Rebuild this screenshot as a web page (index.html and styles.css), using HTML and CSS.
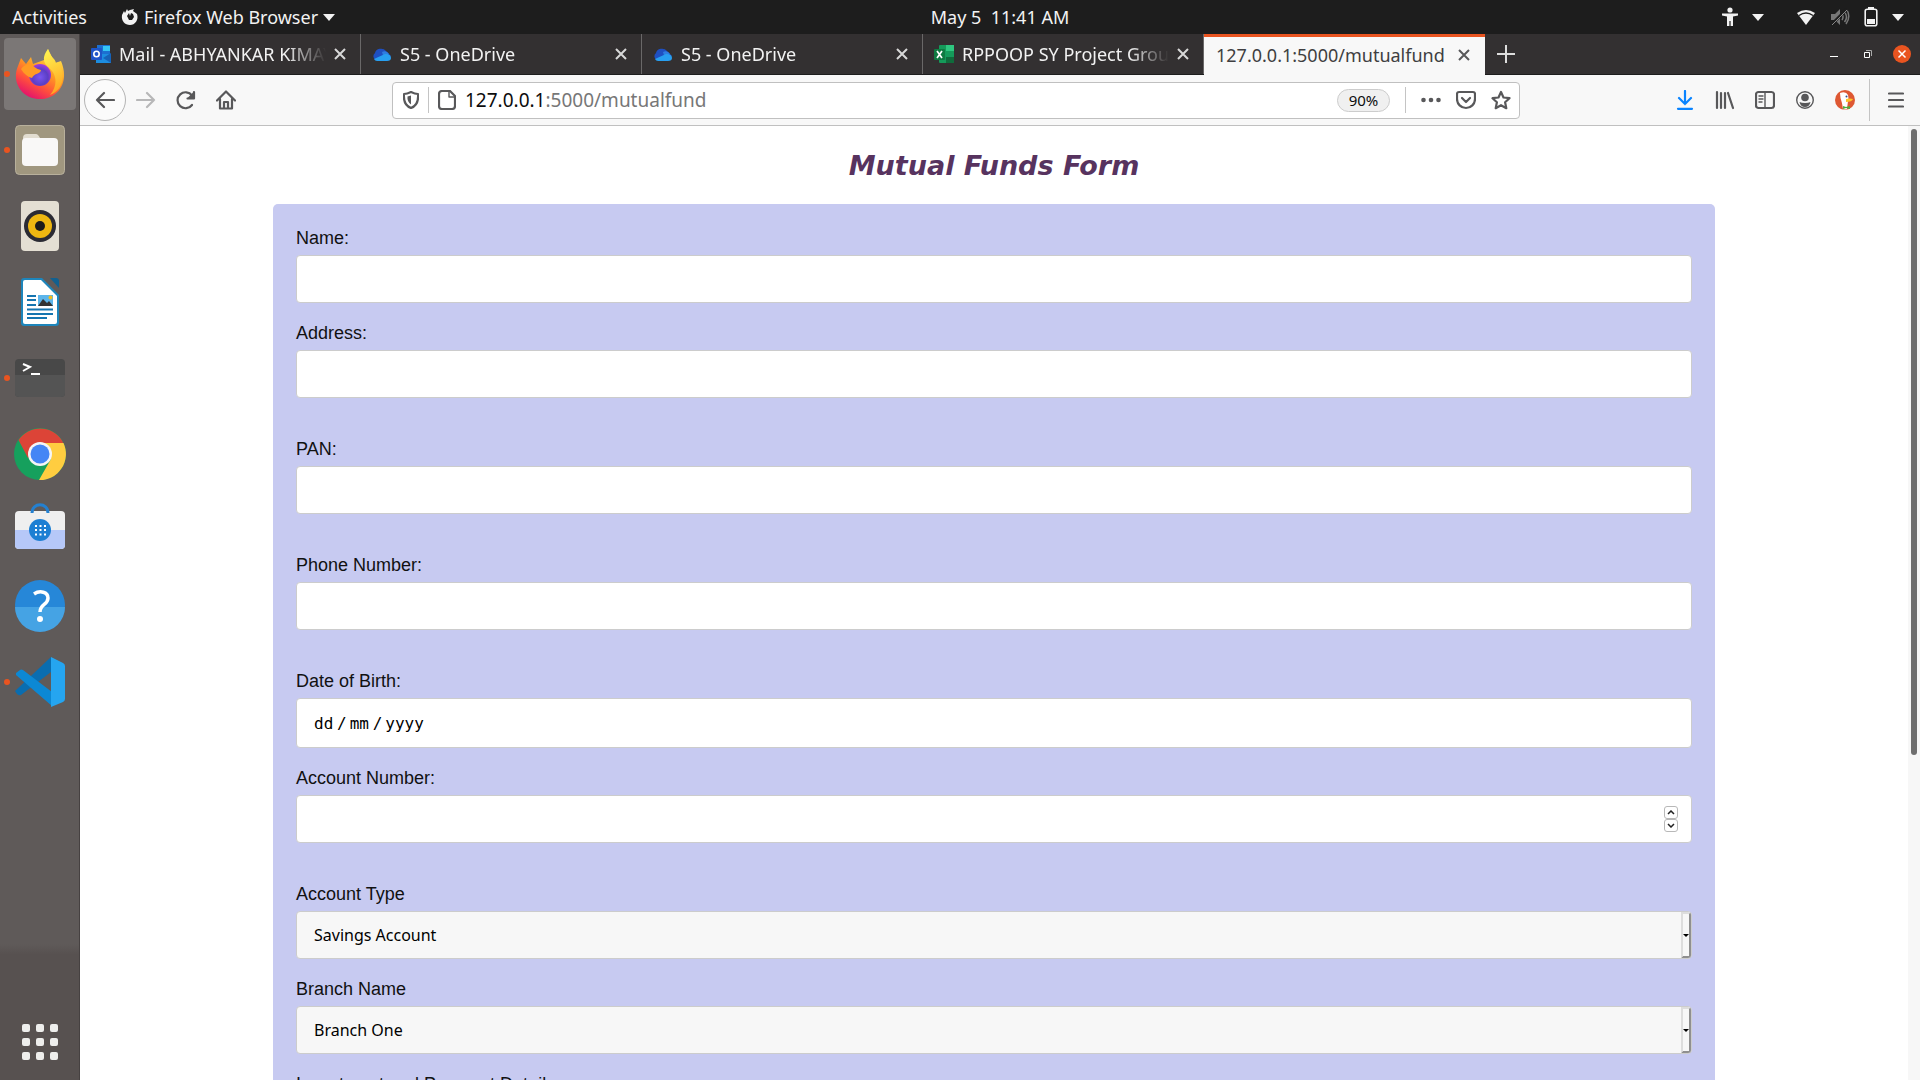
FILE: index.html
```html
<!DOCTYPE html>
<html lang="en">
<head>
<meta charset="utf-8">
<title>Mutual Funds Form</title>
<link rel="stylesheet" href="styles.css">
</head>
<body>
<header class="topbar">
  <div class="topbar-left">
    <button class="top-btn">Activities</button>
    <button class="top-btn app-menu">
      <svg width="18" height="18" viewBox="0 0 18 18"><path d="M6 1 7 3 9 2 13 1 12 3 16 6C18 12 14 17 9 17S0 13 1 7L3 3 4 5ZM8 5 6 8 8 12 11 12 13 9 12 6 10 5 9 8Z" fill="#f2f2f2" fill-rule="evenodd"/></svg>
      Firefox Web Browser
      <svg width="12" height="8" viewBox="0 0 12 8"><path d="M0 1h12L6 8Z" fill="#f2f2f2"/></svg>
    </button>
  </div>
  <button class="top-btn clock">May 5&nbsp; 11:41 AM</button>
  <div class="topbar-right">
    <svg width="16" height="20" viewBox="0 0 16 20"><circle cx="8" cy="3" r="2.6" fill="#f2f2f2"/><path d="M0 6.5h16v2l-5 1V19H8.600v-5H7.400v5H5V9.500l-5-1Z" fill="#f2f2f2"/></svg>
    <svg class="gap-wide" width="12" height="8" viewBox="0 0 12 8"><path d="M0 1h12L6 8Z" fill="#f2f2f2"/></svg>
    <svg width="20" height="18" viewBox="0 0 20 18"><path d="M1 5Q10-1 19 5L10 17Z" fill="#f2f2f2"/><path d="M3 7.500Q10 2.500 17 7.500" fill="none" stroke="#1d1d1d" stroke-width="1.300"/></svg>
    <svg width="20" height="18" viewBox="0 0 20 18"><path d="M1 6h4l5-5v16l-5-5H1Z" fill="#777"/><path d="M12 6q2 3 0 6M14.500 4q4 5 0 10M17 2q4 7-1 14" fill="none" stroke="#777" stroke-width="1.500"/><path d="M1 17 17 1" stroke="#1d1d1d" stroke-width="3"/><path d="M2 17 17 2" stroke="#888" stroke-width="1"/></svg>
    <svg width="14" height="20" viewBox="0 0 14 20"><path d="M4 0h6v3H4Z" fill="#f2f2f2"/><rect x="1.200" y="2.200" width="11.600" height="16.600" rx="2" fill="none" stroke="#f2f2f2" stroke-width="1.600"/><path d="M3 12h8v5H3Z" fill="#f2f2f2"/></svg>
    <svg width="12" height="8" viewBox="0 0 12 8"><path d="M0 1h12L6 8Z" fill="#f2f2f2"/></svg>
  </div>
</header>

<div class="desktop">
  <nav class="dock" aria-label="Dock">
    <button class="dock-item running current" aria-label="Firefox">
      <svg width="50" height="52" viewBox="0 0 50 52">
        <defs>
          <linearGradient id="fx" x1=".8" y1=".1" x2=".3" y2="1"><stop offset="0" stop-color="#ffe14a"/><stop offset=".4" stop-color="#ff9a22"/><stop offset=".7" stop-color="#ff4f3c"/><stop offset="1" stop-color="#e3106f"/></linearGradient>
          <linearGradient id="fy" x1=".5" y1="0" x2=".7" y2="1"><stop offset="0" stop-color="#fff04e"/><stop offset="1" stop-color="#ffa01e"/></linearGradient>
          <radialGradient id="fp" cx=".5" cy=".6" r=".6"><stop offset="0" stop-color="#7a55f0"/><stop offset=".6" stop-color="#5b3fc4"/><stop offset="1" stop-color="#a63ae0"/></radialGradient>
        </defs>
        <path d="M6 10 11 16 16 9 18 16 29 12 33 1 40 15 46 13C55 34 43 51 25 51S-4 34 3 18Z" fill="url(#fx)"/>
        <path d="M33 1c2 8 7 9 8 14l3-1c8 17 2 29-9 33 8-9 7-21-1-27-5-4-8-10-1-19Z" fill="url(#fy)"/>
        <circle cx="25" cy="27" r="11" fill="url(#fp)"/>
        <path d="M15 16c4 2 6 5 11 6 0 4-7 3-9 8-4-1-8-4-11-9 2-3 5-5 9-5Z" fill="#ff9b24"/>
      </svg>
    </button>
    <button class="dock-item running" aria-label="Files">
      <svg width="50" height="50" viewBox="0 0 50 50"><rect x=".5" y=".5" width="49" height="49" rx="4" fill="#a0977f" stroke="#b8b09c"/><path d="M8 13q0-4 4-4h9q2 0 4 4h3v10H8Z" fill="#e2ddd0"/><rect x="7" y="13" width="36" height="28" rx="4" fill="#f9f8f7"/></svg>
    </button>
    <button class="dock-item" aria-label="Rhythmbox">
      <svg width="50" height="50" viewBox="0 0 50 50"><rect x="6" y="0" width="38" height="50" rx="4" fill="#e4dfd3"/><circle cx="25" cy="25" r="16" fill="#2b2b33"/><circle cx="25" cy="25" r="12" fill="#eeb711"/><circle cx="25" cy="25" r="5" fill="#1b1b1b"/></svg>
    </button>
    <button class="dock-item" aria-label="LibreOffice Writer">
      <svg width="50" height="50" viewBox="0 0 50 50"><path d="M9 1h18l17 17v28q0 3-3 3H9q-3 0-3-3V4q0-3 3-3Z" fill="#1d85bb"/><path d="M10 3h16l16 16v26q0 2-2 2H10q-2 0-2-2V5q0-2 2-2Z" fill="#fff"/><path d="M35 1h6q3 0 3 3v7Z" fill="#12608f"/><path d="M12 19h9M12 23h9M12 28h9M12 32.500h26M12 37h26M12 41h20" stroke="#1575b0" stroke-width="2"/><path d="M23 18h15v11H23Z" fill="#5db5ea"/><path d="m23 29 5-7 4 4 2-2 4 5Z" fill="#333"/><circle cx="35.500" cy="20.500" r="2" fill="#f0bd20"/></svg>
    </button>
    <button class="dock-item running" aria-label="Terminal">
      <svg width="50" height="50" viewBox="0 0 50 50"><rect y="6" width="50" height="38" rx="4" fill="#484848"/><path d="M0 22h50v18q0 4-4 4H4q-4 0-4-4Z" fill="#545454"/><path d="m8 11 7 3-7 4M16 21h9" fill="none" stroke="#fff" stroke-width="2"/></svg>
    </button>
    <button class="dock-item" aria-label="Chrome">
      <svg width="52" height="52" viewBox="0 0 52 52"><circle cx="26" cy="26" r="26" fill="#16a05d"/><path d="M4.500 12A26 26 0 0 1 48 12.500l1.500 3H26L14 30Z" fill="#dc4437"/><path d="M26 15h23.500A26 26 0 0 1 25 52l12-21Z" fill="#ffcd40"/><circle cx="26" cy="26" r="12" fill="#f5f5f5"/><circle cx="26" cy="26" r="9.500" fill="#4486f5"/></svg>
    </button>
    <button class="dock-item" aria-label="Software">
      <svg width="50" height="54" viewBox="0 2 50 54"><rect y="10" width="50" height="38" rx="4" fill="#efefef"/><path d="M0 29h50v15q0 4-4 4H4q-4 0-4-4Z" fill="#b6c8f8"/><path d="M17 12C17 1 33 1 33 12" fill="none" stroke="#2480d0" stroke-width="3"/><circle cx="25" cy="29" r="11" fill="#1d7fd3"/><path d="M20 25h12M20 29h12M20 33.500h12" stroke="#fff" stroke-width="2" stroke-dasharray="2 2.500"/></svg>
    </button>
    <button class="dock-item" aria-label="Help">
      <svg width="50" height="52" viewBox="0 0 50 52"><circle cx="25" cy="25" r="25" fill="#2687d8"/><path d="M0 27h50a25 25 0 0 1-50 0Z" fill="#45a3e4"/><path d="M19 14c6-4 14-2 14 4 0 7-8 6-8 14" fill="none" stroke="#fff" stroke-width="3.500"/><circle cx="25" cy="39" r="3" fill="#fff"/></svg>
    </button>
    <button class="dock-item running" aria-label="Visual Studio Code">
      <svg width="50" height="50" viewBox="0 0 50 50"><path d="M0 34 36 0v15L6 38q-2 1-4-1Z" fill="#0a6db0"/><path d="m1 16 4-3q1-1 3 0l29 22v14L1 18Z" fill="#0c88d4"/><path d="m36 0 12 6q2 1 2 3v33q0 2-2 3l-12 5Z" fill="#25a5f0"/></svg>
    </button>
    <button class="apps-button" aria-label="Show Applications">
      <svg width="36" height="36" viewBox="0 0 36 36" fill="#eeeeec"><rect width="8" height="8" rx="2"/><rect x="14" width="8" height="8" rx="2"/><rect x="28" width="8" height="8" rx="2"/><rect y="14" width="8" height="8" rx="2"/><rect x="14" y="14" width="8" height="8" rx="2"/><rect x="28" y="14" width="8" height="8" rx="2"/><rect y="28" width="8" height="8" rx="2"/><rect x="14" y="28" width="8" height="8" rx="2"/><rect x="28" y="28" width="8" height="8" rx="2"/></svg>
    </button>
  </nav>

  <div class="window">
    <div class="tabstrip">
      <div class="tab">
        <svg width="20" height="18" viewBox="0 0 20 18"><path d="M6 0h13v10H6Z" fill="#1c6fd0"/><path d="M12 1h7v5h-7Z" fill="#35c5f5"/><path d="m5 9 15 0v9H5Z" fill="#1d8de0"/><path d="m12 13 8-5v10Z" fill="#1662b8"/><rect y="3" width="11" height="12" rx="1" fill="#1e55c8"/><circle cx="5.500" cy="9" r="2.700" fill="none" stroke="#fff" stroke-width="1.600"/></svg>
        <span class="tab-title">Mail - ABHYANKAR KIMAY</span>
        <button class="tab-close" aria-label="Close tab"><svg width="12" height="12" viewBox="0 0 12 12"><path d="m1 1 10 10M11 1 1 11"/></svg></button>
      </div>
      <div class="tab">
        <svg width="20" height="14" viewBox="0 0 20 14"><path d="M3 6a6 5 0 0 1 11-2l5 5-15 4A4 4 0 0 1 3 6Z" fill="#1f4fc0"/><path d="M10 5a5 5 0 0 1 7 2l-5 5Z" fill="#2f7de0"/><path d="m2 12 11-5q6 0 6 4 0 3-4 3H5q-2 0-3-2Z" fill="#289ff0"/></svg>
        <span class="tab-title">S5 - OneDrive</span>
        <button class="tab-close" aria-label="Close tab"><svg width="12" height="12" viewBox="0 0 12 12"><path d="m1 1 10 10M11 1 1 11"/></svg></button>
      </div>
      <div class="tab">
        <svg width="20" height="14" viewBox="0 0 20 14"><path d="M3 6a6 5 0 0 1 11-2l5 5-15 4A4 4 0 0 1 3 6Z" fill="#1f4fc0"/><path d="M10 5a5 5 0 0 1 7 2l-5 5Z" fill="#2f7de0"/><path d="m2 12 11-5q6 0 6 4 0 3-4 3H5q-2 0-3-2Z" fill="#289ff0"/></svg>
        <span class="tab-title">S5 - OneDrive</span>
        <button class="tab-close" aria-label="Close tab"><svg width="12" height="12" viewBox="0 0 12 12"><path d="m1 1 10 10M11 1 1 11"/></svg></button>
      </div>
      <div class="tab">
        <svg width="20" height="18" viewBox="0 0 20 18"><rect x="5" width="15" height="18" rx="1" fill="#159a5a"/><path d="M12 0h8v6h-8Z" fill="#2fc77f"/><path d="M12 12h8v6h-8Z" fill="#106b3c"/><rect y="4" width="11" height="11" rx="1" fill="#0f7a41"/><path d="m3 6 5 7M8 6l-5 7" stroke="#fff" stroke-width="1.700"/></svg>
        <span class="tab-title">RPPOOP SY Project Grou</span>
        <button class="tab-close" aria-label="Close tab"><svg width="12" height="12" viewBox="0 0 12 12"><path d="m1 1 10 10M11 1 1 11"/></svg></button>
      </div>
      <div class="tab active">
        <span class="tab-title">127.0.0.1:5000/mutualfund</span>
        <button class="tab-close" aria-label="Close tab"><svg width="12" height="12" viewBox="0 0 12 12"><path d="m1 1 10 10M11 1 1 11"/></svg></button>
      </div>
      <button class="new-tab" aria-label="New tab"><svg width="18" height="18" viewBox="0 0 18 18"><path d="M9 0v18M0 9h18" stroke="#ddd" stroke-width="2"/></svg></button>
      <div class="window-controls">
        <button aria-label="Minimize"><svg width="18" height="18" viewBox="0 0 18 18"><path d="M5 11.500h8" stroke="#fff"/></svg></button>
        <button aria-label="Restore"><svg width="18" height="18" viewBox="0 0 18 18"><path d="M5.500 7.500h5v5h-5Z" fill="none" stroke="#fff"/><path d="M7 5.500h5.500V11" fill="none" stroke="#aaa"/></svg></button>
        <button aria-label="Close"><svg width="18" height="18" viewBox="0 0 18 18"><circle cx="9" cy="9" r="9" fill="#e95420"/><path d="m5.500 5.500 7 7m0-7-7 7" stroke="#fff" stroke-width="1.500"/></svg></button>
      </div>
    </div>

    <div class="toolbar">
      <div class="nav-buttons">
        <button class="back" aria-label="Back"><svg width="20" height="18" viewBox="0 0 20 18"><path d="M19 9H2M9 2 2 9l7 7" class="line"/></svg></button>
        <button aria-label="Forward"><svg class="faded" width="20" height="18" viewBox="0 0 20 18"><path d="M1 9h17M11 2l7 7-7 7" class="line"/></svg></button>
        <button aria-label="Reload"><svg width="20" height="20" viewBox="0 0 20 20"><path d="M16 15A8 8 0 1 1 16 5.500" class="line"/><path d="M18 1.500v7h-7Z" fill="#58585a"/><path d="M18 2v6.500h-6.500" class="line"/></svg></button>
        <button aria-label="Home"><svg width="20" height="20" viewBox="0 0 20 20"><path d="m1 10.500 9-9 9 9M4 9v9.500h12V9" class="line"/><path d="M8 18v-6h4v6" class="line"/></svg></button>
      </div>
      <div class="urlbar">
        <svg width="16" height="18" viewBox="0 0 16 18"><path d="M8 1q4 2 7 2 1 11-7 14-8-3-7-14 3 0 7-2Z" class="line"/><path d="M8 4.500v9Q4 11 4.500 5.500Z" fill="#58585a"/></svg>
        <span class="divider"></span>
        <svg width="18" height="20" viewBox="0 0 18 20"><path d="M4 1h8l5 5v10q0 3-3 3H4q-3 0-3-3V4q0-3 3-3Z" class="line"/><path d="M11 1v6h6" class="line thin"/></svg>
        <div class="url" role="textbox" aria-label="Address bar"><b>127.0.0.1</b>:5000/mutualfund</div>
        <button class="zoom-level">90%</button>
        <span class="divider"></span>
        <svg width="20" height="20" viewBox="0 0 20 20"><g fill="#58585a"><circle cx="2.500" cy="10" r="2.300"/><circle cx="10" cy="10" r="2.300"/><circle cx="17.500" cy="10" r="2.300"/></g></svg>
        <svg width="20" height="20" viewBox="0 0 20 20"><path d="M3 2h14q2 0 2 2v5a9 9 0 0 1-18 0V4q0-2 2-2Z" class="line"/><path d="m6 8 4 4 4-4" class="line"/></svg>
        <svg width="20" height="20" viewBox="0 0 20 20"><path d="m10 2 2.500 5.500 6 .700-4.400 4 1.200 6L10 15.200l-5.300 3 1.200-6-4.400-4 6-.700Z" class="line"/></svg>
      </div>
      <div class="tools">
        <button aria-label="Downloads"><svg width="20" height="20" viewBox="0 0 20 20"><path d="M10 1v13M4 8l6 6 6-6M3 18.800h14" fill="none" stroke="#0a84ff" stroke-width="2.200" stroke-linecap="round"/></svg></button>
        <button aria-label="Library"><svg width="20" height="20" viewBox="0 0 20 20"><path d="M2 2v16M6 3v15M10 3v15M13 3l5 15" class="line"/></svg></button>
        <button aria-label="Sidebars"><svg width="20" height="20" viewBox="0 0 20 20"><rect x="1" y="2" width="18" height="16" rx="2.500" class="line"/><path d="M10 2v16M4 6h4M4 9h4M4 12h3" class="line thin"/></svg></button>
        <button aria-label="Account"><svg width="20" height="20" viewBox="0 0 20 20"><circle cx="10" cy="10" r="8.300" class="line thin"/><circle cx="10" cy="7.500" r="3.800" fill="#58585a"/><path d="M4.500 12q2 1 5.500 1t5.500-1q-1 5-5.500 5t-5.500-5Z" fill="#58585a"/></svg></button>
        <button aria-label="DuckDuckGo"><svg width="20" height="20" viewBox="0 0 20 20"><circle cx="10" cy="10" r="10" fill="#de5833"/><path d="M5 3q6-2 8 2 1 3 0 6l-1 8q-2 1-4 0Q7 12 5.500 8Z" fill="#fff"/><path d="M11 9q4-1 7 0-1 3-7 3Z" fill="#fdc42a"/><circle cx="11.500" cy="6.500" r="1" fill="#2d4f8e"/><path d="m8 16 3 1 4-1v3l-4-1-3 1Z" fill="#4caf3a"/></svg></button>
        <span class="divider tall"></span>
        <button class="menu" aria-label="Menu"><svg width="16" height="16" viewBox="0 0 16 16"><path d="M1 1.500h14M1 8h14M1 14.500h14" class="line"/></svg></button>
      </div>
    </div>

    <div class="viewport">
      <main class="page">
        <h1>Mutual Funds Form</h1>
        <form class="fund-form">
          <div class="field"><label for="name">Name:</label><input class="box" id="name" type="text"></div>
          <div class="field spaced"><label for="address">Address:</label><input class="box" id="address" type="text"></div>
          <div class="field spaced"><label for="pan">PAN:</label><input class="box" id="pan" type="text"></div>
          <div class="field spaced"><label for="phone">Phone Number:</label><input class="box" id="phone" type="text"></div>
          <div class="field">
            <label for="dob-day">Date of Birth:</label>
            <div class="box date-box" role="group" aria-label="Date of Birth">
              <input id="dob-day" type="text" placeholder="dd" aria-label="Day"><span>/</span><input type="text" placeholder="mm" aria-label="Month"><span>/</span><input class="year" type="text" placeholder="yyyy" aria-label="Year">
            </div>
          </div>
          <div class="field spaced">
            <label for="account">Account Number:</label>
            <div class="control">
              <input class="box" id="account" type="number">
              <div class="spinner">
                <button type="button" aria-label="Increase"><svg width="8" height="5" viewBox="0 0 8 5"><path d="m1 4 3-3 3 3"/></svg></button>
                <button type="button" aria-label="Decrease"><svg width="8" height="5" viewBox="0 0 8 5"><path d="m1 1 3 3 3-3"/></svg></button>
              </div>
            </div>
          </div>
          <div class="field">
            <label for="type">Account Type</label>
            <div class="control">
              <select class="box" id="type"><option>Savings Account</option></select>
              <span class="drop"><svg width="6" height="3" viewBox="0 0 6 3"><path d="M0 0h6L3 3Z"/></svg></span>
            </div>
          </div>
          <div class="field">
            <label for="branch">Branch Name</label>
            <div class="control">
              <select class="box" id="branch"><option>Branch One</option></select>
              <span class="drop"><svg width="6" height="3" viewBox="0 0 6 3"><path d="M0 0h6L3 3Z"/></svg></span>
            </div>
          </div>
          <div class="field"><label for="details">Investment and Payment Details</label><input class="box" id="details" type="text"></div>
        </form>
      </main>
      <div class="scrollbar"><div class="thumb"></div></div>
    </div>
  </div>
</div>
</body>
</html>
```
FILE: styles.css
```css
* { box-sizing: border-box; }

body {
  margin: 0;
  height: 100vh;
  display: flex;
  flex-direction: column;
  overflow: hidden;
  font-family: "Noto Sans", "Open Sans", sans-serif;
  font-size: 18px;
  background: #fff;
}

button {
  display: flex;
  align-items: center;
  justify-content: center;
  padding: 0;
  border: 0;
  background: none;
  color: inherit;
  font: inherit;
}

svg { flex: none; display: block; }

/* System bar: the clock is centred over the window area, right of the dock */
.topbar {
  flex: none;
  height: 34px;
  display: grid;
  grid-template-columns: 1fr auto 1fr;
  align-items: center;
  padding: 0 16px 0 96px;
  background: #1d1d1d;
  color: #f2f2f2;
  line-height: 24px;
}
.topbar-left { display: flex; gap: 34px; margin-left: -84px; }
.app-menu { gap: 5px; }
.topbar-right { display: flex; justify-content: flex-end; align-items: center; gap: 14px; }
.topbar-right .gap-wide { margin-right: 18px; }

.desktop { flex: 1; min-height: 0; display: flex; }

/* Dock */
.dock {
  flex: none;
  width: 80px;
  display: flex;
  flex-direction: column;
  align-items: center;
  gap: 4px;
  padding: 4px 0 20px;
  border-right: 1px solid #464141;
  background: linear-gradient(#5f5a59 87%, #575150 88%);
}
.dock-item { position: relative; width: 72px; height: 72px; border-radius: 4px; }
.dock-item.current { background: #7b7776; }
.dock-item.running::before {
  content: "";
  position: absolute;
  left: 0;
  top: 33px;
  width: 6px;
  height: 6px;
  border-radius: 50%;
  background: #e95420;
}
.apps-button { margin-top: auto; }

/* Browser window */
.window { flex: 1; min-width: 0; display: flex; flex-direction: column; }

.tabstrip {
  flex: none;
  height: 41px;
  display: flex;
  background: #333031;
  color: #f2f2f2;
  border-bottom: 1px solid #1d1d1d;
}
.tab {
  flex: 0 1 281px;
  min-width: 0;
  display: flex;
  align-items: center;
  gap: 8px;
  padding: 0 14px 0 11px;
  border-right: 1px solid #6a6868;
}
.tab-title {
  flex: 1;
  min-width: 0;
  overflow: hidden;
  white-space: nowrap;
  mask-image: linear-gradient(to left, transparent, #000 40px);
}
.tab-close path { stroke: #d8d8d8; stroke-width: 2; }
.tab.active {
  height: 41px;
  padding: 0 15px 3px 12px;
  border-top: 3px solid #e95420;
  border-right: 0;
  background: #f8f8f8;
  color: #3f3f41;
}
.tab.active .tab-title { mask-image: none; }
.tab.active .tab-close path { stroke: #58585a; }
.new-tab { width: 42px; }
.window-controls { display: flex; align-items: center; gap: 16px; margin-left: auto; padding-right: 9px; }

.toolbar {
  flex: none;
  height: 51px;
  display: flex;
  align-items: center;
  padding: 0 16px 0 4px;
  background: #f8f8f8;
  border-bottom: 1px solid #c0c0c0;
}
.line { fill: none; stroke: #58585a; stroke-width: 2.2; stroke-linecap: round; stroke-linejoin: round; }
.line.thin { stroke-width: 1.4; }
.faded { opacity: .4; }
.nav-buttons { flex: 0 1 308px; display: flex; align-items: center; gap: 20px; }
.nav-buttons .back {
  width: 42px;
  height: 42px;
  margin-right: -10px;
  border: 1px solid #b4b4b4;
  border-radius: 50%;
  background: #fbfbfb;
}
.urlbar {
  flex: 0 1 1128px;
  height: 37px;
  display: flex;
  align-items: center;
  padding: 0 8px 0 10px;
  gap: 9px;
  border: 1px solid #c0c0c0;
  border-radius: 4px;
  background: #fff;
}
.urlbar svg + svg { margin-left: 6px; }
.divider { width: 1px; height: 26px; background: #c4c4c4; }
.divider.tall { height: 42px; }
.url { flex: 1; font-size: 19px; color: #777; white-space: nowrap; }
.url b { font-weight: 400; color: #0c0c0d; }
.zoom-level {
  width: 53px;
  height: 23px;
  margin-right: 6px;
  border: 1px solid #ccc;
  border-radius: 12px;
  background: #f0f0f0;
  color: #0c0c0d;
  font-size: 15px;
}
.zoom-level + .divider { margin-right: 6px; }
.tools { flex: 1; display: flex; align-items: center; justify-content: flex-end; gap: 20px; }
.tools .divider { margin-left: -6px; margin-right: -2px; }

/* Web page */
.viewport { flex: 1; min-height: 0; display: flex; overflow: hidden; }
.page { flex: 1; min-width: 0; overflow: hidden; padding: 24px 193px 0; }
h1 {
  margin: 0 0 22px;
  font: italic 700 27px/32px "DejaVu Sans", sans-serif;
  text-align: center;
  color: #57335f;
}
.fund-form {
  padding: 24px 23px;
  border-radius: 5px;
  background: #c7caf1;
  font: 18px/20px "Liberation Sans", Arial, sans-serif;
  color: #111;
}
.field { display: flex; flex-direction: column; gap: 7px; padding-bottom: 20px; }
.field.spaced { padding-bottom: 41px; }
.control { position: relative; }
.box {
  display: block;
  width: 100%;
  height: 48px;
  padding: 0 17px;
  border: 1px solid #ccc;
  border-radius: 4px;
  background: #fff;
  color: #000;
  font: 16px "Noto Sans", "Open Sans", sans-serif;
}
select.box { appearance: none; background: #f7f7f7; }
input[type="number"] { appearance: textfield; }
.date-box {
  height: 50px;
  display: flex;
  align-items: center;
  gap: 3px;
  font: 16px "DejaVu Sans Mono", monospace;
}
.date-box input { width: 20px; padding: 0; border: 0; background: none; font: inherit; }
.date-box input.year { width: 40px; }
.date-box input::placeholder { color: #000; opacity: 1; }
.spinner { position: absolute; right: 14px; top: 11px; }
.spinner button {
  width: 14px;
  height: 13px;
  border: 1px solid #b8b8b8;
  border-radius: 3px;
  background: #fff;
}
.spinner path { fill: none; stroke: #222; stroke-width: 1.5; }
.drop {
  position: absolute;
  top: 1px;
  right: 1px;
  bottom: 1px;
  width: 10px;
  display: flex;
  align-items: center;
  justify-content: center;
  border: 2px solid;
  border-color: #ddd #8f8f8f #8f8f8f #ddd;
  border-radius: 0 3px 3px 0;
  background: #f7f7f7;
  pointer-events: none;
}

.scrollbar { flex: none; width: 12px; padding: 3px; background: #f7f7f7; }
.thumb { height: 66%; border-radius: 3px; background: #6f6f6f; }
```
